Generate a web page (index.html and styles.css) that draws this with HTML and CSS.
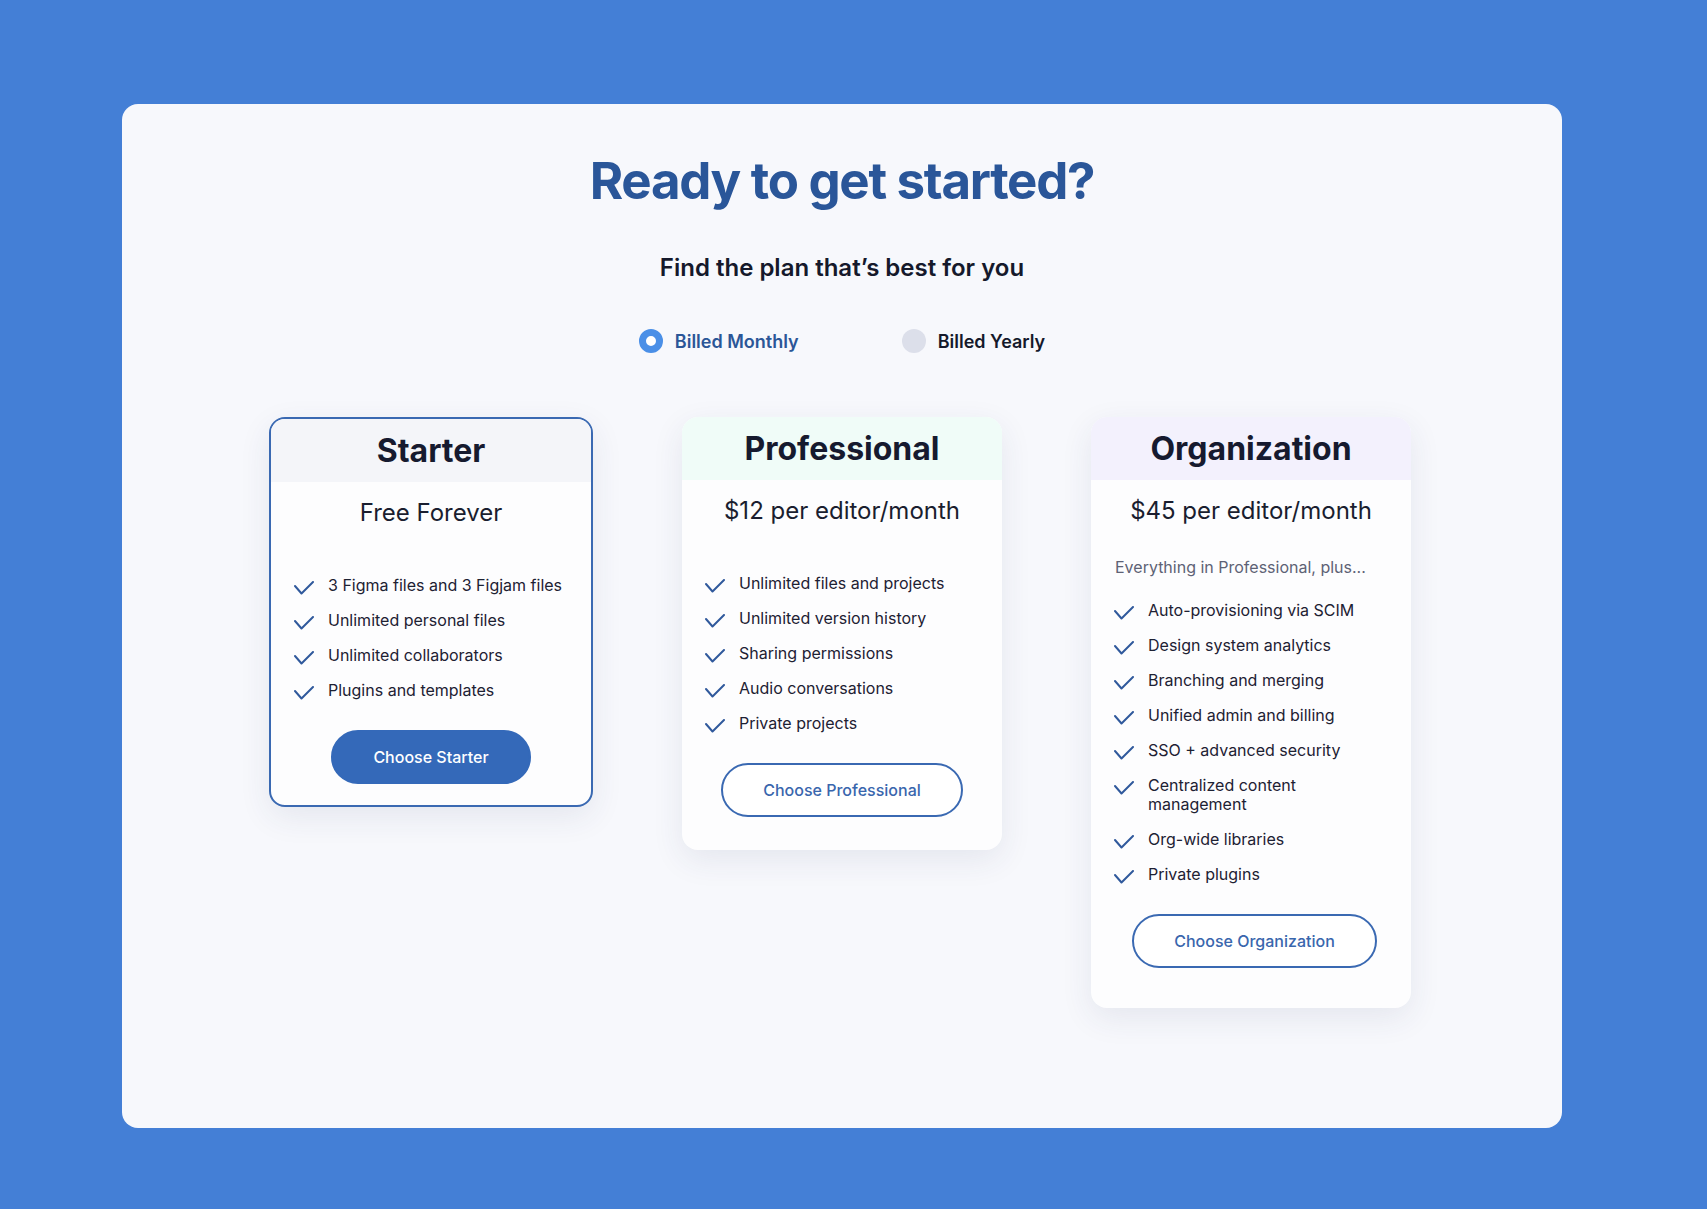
FILE: index.html
```html
<!DOCTYPE html>
<html lang="en">
<head>
<meta charset="utf-8">
<title>Pricing</title>
<link rel="stylesheet" href="styles.css">
</head>
<body>
<div class="page">
  <section class="panel">
    <h1 class="title">Ready to get started?</h1>
    <p class="subtitle">Find the plan that’s best for you</p>
    <div class="billing">
      <label class="option option-active"><span class="radio radio-on"></span><span>Billed Monthly</span></label>
      <label class="option"><span class="radio"></span><span>Billed Yearly</span></label>
    </div>
    <div class="plans">
      <div class="card card-starter">
        <div class="card-head head-starter">Starter</div>
        <div class="price">Free Forever</div>
        <ul class="features">
          <li><svg class="check" viewBox="0 0 20 14"><path d="M1 5 L7.5 12.5 L19 1"/></svg><span>3 Figma files and 3 Figjam files</span></li>
          <li><svg class="check" viewBox="0 0 20 14"><path d="M1 5 L7.5 12.5 L19 1"/></svg><span>Unlimited personal files</span></li>
          <li><svg class="check" viewBox="0 0 20 14"><path d="M1 5 L7.5 12.5 L19 1"/></svg><span>Unlimited collaborators</span></li>
          <li><svg class="check" viewBox="0 0 20 14"><path d="M1 5 L7.5 12.5 L19 1"/></svg><span>Plugins and templates</span></li>
        </ul>
        <div class="btn-row"><button class="btn btn-fill">Choose Starter</button></div>
      </div>
      <div class="card card-pro">
        <div class="card-head head-pro">Professional</div>
        <div class="price">$12 per editor/month</div>
        <ul class="features">
          <li><svg class="check" viewBox="0 0 20 14"><path d="M1 5 L7.5 12.5 L19 1"/></svg><span>Unlimited files and projects</span></li>
          <li><svg class="check" viewBox="0 0 20 14"><path d="M1 5 L7.5 12.5 L19 1"/></svg><span>Unlimited version history</span></li>
          <li><svg class="check" viewBox="0 0 20 14"><path d="M1 5 L7.5 12.5 L19 1"/></svg><span>Sharing permissions</span></li>
          <li><svg class="check" viewBox="0 0 20 14"><path d="M1 5 L7.5 12.5 L19 1"/></svg><span>Audio conversations</span></li>
          <li><svg class="check" viewBox="0 0 20 14"><path d="M1 5 L7.5 12.5 L19 1"/></svg><span>Private projects</span></li>
        </ul>
        <div class="btn-row"><button class="btn btn-outline">Choose Professional</button></div>
      </div>
      <div class="card card-org">
        <div class="card-head head-org">Organization</div>
        <div class="price">$45 per editor/month</div>
        <p class="plus">Everything in Professional, plus...</p>
        <ul class="features features-org">
          <li><svg class="check" viewBox="0 0 20 14"><path d="M1 5 L7.5 12.5 L19 1"/></svg><span>Auto-provisioning via SCIM</span></li>
          <li><svg class="check" viewBox="0 0 20 14"><path d="M1 5 L7.5 12.5 L19 1"/></svg><span>Design system analytics</span></li>
          <li><svg class="check" viewBox="0 0 20 14"><path d="M1 5 L7.5 12.5 L19 1"/></svg><span>Branching and merging</span></li>
          <li><svg class="check" viewBox="0 0 20 14"><path d="M1 5 L7.5 12.5 L19 1"/></svg><span>Unified admin and billing</span></li>
          <li><svg class="check" viewBox="0 0 20 14"><path d="M1 5 L7.5 12.5 L19 1"/></svg><span>SSO + advanced security</span></li>
          <li><svg class="check" viewBox="0 0 20 14"><path d="M1 5 L7.5 12.5 L19 1"/></svg><span>Centralized content<br>management</span></li>
          <li><svg class="check" viewBox="0 0 20 14"><path d="M1 5 L7.5 12.5 L19 1"/></svg><span>Org-wide libraries</span></li>
          <li><svg class="check" viewBox="0 0 20 14"><path d="M1 5 L7.5 12.5 L19 1"/></svg><span>Private plugins</span></li>
        </ul>
        <div class="btn-row btn-row-org"><button class="btn btn-outline">Choose Organization</button></div>
      </div>
    </div>
  </section>
</div>
</body>
</html>
```
FILE: styles.css
```css
* { box-sizing: border-box; }
html, body { margin: 0; padding: 0; }
body {
  background: #447fd6;
  font-family: Inter, "Noto Sans", "Liberation Sans", sans-serif;
  color: #161a2d;
}
.page {
  padding: 104px 145px 81px 122px;
}
.panel {
  background: #f7f8fc;
  border-radius: 16px;
  height: 1024px;
  padding-top: 46px;
  display: flex;
  flex-direction: column;
  align-items: center;
}
.title {
  margin: 0;
  font-size: 51px;
  line-height: 62px;
  font-weight: 700;
  color: #2a5699;
  letter-spacing: -1.3px;
}
.subtitle {
  margin: 41px 0 0;
  font-size: 24px;
  line-height: 29px;
  font-weight: 600;
  color: #15192b;
}
.billing {
  margin-top: 47px;
  display: flex;
  gap: 103px;
  height: 24px;
  align-items: center;
}
.option {
  display: flex;
  align-items: center;
  gap: 12px;
  font-size: 18px;
  font-weight: 600;
  color: #15192b;
}
.option-active { color: #2b5697; }
.radio {
  width: 24px;
  height: 24px;
  border-radius: 50%;
  background: #dcdfea;
}
.radio-on {
  background: #ffffff;
  border: 7px solid #4a8fe7;
}
.plans {
  margin-top: 64px;
  margin-right: 4px;
  display: flex;
  align-items: flex-start;
  gap: 89px;
}
.card {
  width: 320px;
  background: #fdfdfe;
  border-radius: 16px;
  overflow: hidden;
  box-shadow: 0 10px 32px rgba(40, 55, 100, 0.09);
}
.card-starter {
  width: 324px;
  border: 2px solid #3a69b2;
  padding-bottom: 21px;
}
.card-pro { padding-bottom: 33px; }
.card-org { padding-bottom: 40px; }
.card-head {
  padding: 12px 0;
  line-height: 39px;
  font-size: 32px;
  font-weight: 700;
  text-align: center;
  color: #161a2f;
}
.head-starter { background: #f4f5f9; }
.head-pro { background: #f0fcf8; }
.head-org { background: #f3f1fd; }
.price {
  margin-top: 16px;
  font-size: 24px;
  line-height: 29px;
  text-align: center;
  color: #1a1e2f;
}
.plus {
  margin: 33px 0 0;
  padding-left: 24px;
  font-size: 16px;
  line-height: 19px;
  color: #5d6275;
}
.features {
  list-style: none;
  margin: 49px 0 0;
  padding: 0 20px 0 23px;
  display: flex;
  flex-direction: column;
  gap: 15.8px;
}
.features-org { margin-top: 24px; }
.features li {
  display: flex;
  align-items: flex-start;
  gap: 14px;
  font-size: 16px;
  line-height: 19.2px;
  color: #1d2133;
}
.check {
  flex: none;
  width: 20px;
  height: 14px;
  margin-top: 5px;
  fill: none;
  stroke: #30599c;
  stroke-width: 2;
  stroke-linecap: round;
  stroke-linejoin: round;
}
.btn-row {
  margin-top: 30px;
  display: flex;
  justify-content: center;
}
.btn-row-org { padding-left: 7px; }
.btn {
  font-family: Inter, "Noto Sans", "Liberation Sans", sans-serif;
  font-size: 16px;
  font-weight: 500;
  line-height: 20px;
  padding: 15px 40px;
  border-radius: 999px;
  border: 2px solid #3a69b2;
  cursor: pointer;
}
.btn-fill {
  background: #3469b9;
  border-color: #3469b9;
  color: #ffffff;
}
.btn-outline {
  background: #ffffff;
  color: #3966ad;
}
```
